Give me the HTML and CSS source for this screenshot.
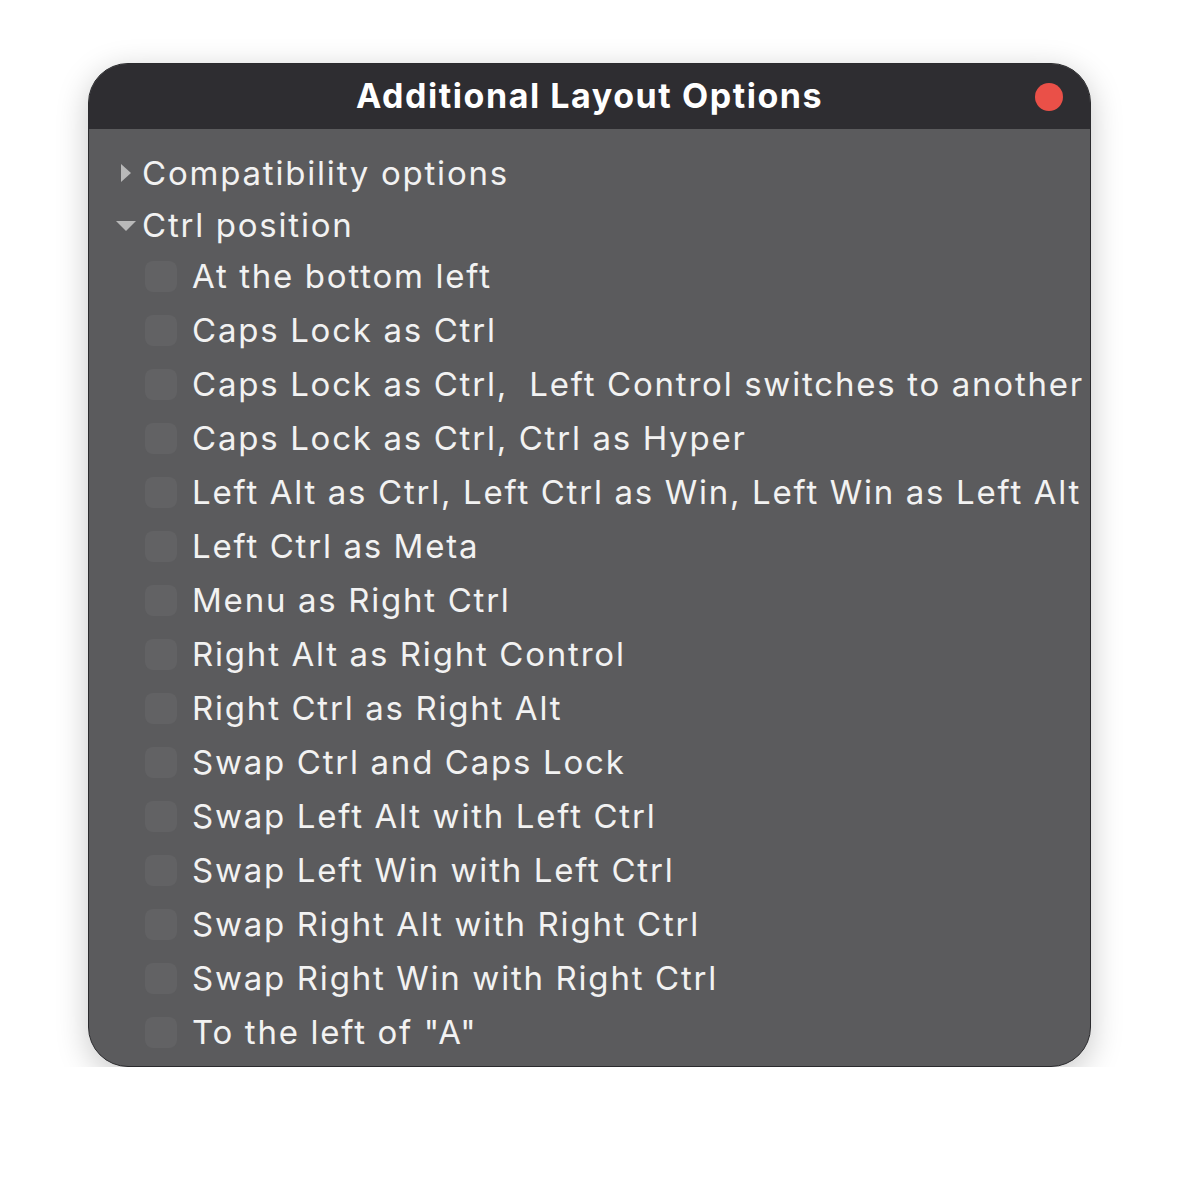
FILE: index.html
```html
<!DOCTYPE html>
<html>
<head>
<meta charset="utf-8">
<link rel="stylesheet" href="styles.css">
</head>
<body>
<div class="window">
  <div class="titlebar">
    <div class="title">Additional Layout Options</div>
    <div class="close"></div>
  </div>
  <div class="content">
    <div class="group"><span class="tri tri-right"></span><span class="label">Compatibility options</span></div>
    <div class="group"><span class="tri tri-down"></span><span class="label">Ctrl position</span></div>
    <div class="items">
      <div class="item"><span class="check"></span><span class="label">At the bottom left</span></div>
      <div class="item"><span class="check"></span><span class="label">Caps Lock as Ctrl</span></div>
      <div class="item"><span class="check"></span><span class="label">Caps Lock as Ctrl,  Left Control switches to another</span></div>
      <div class="item"><span class="check"></span><span class="label">Caps Lock as Ctrl, Ctrl as Hyper</span></div>
      <div class="item"><span class="check"></span><span class="label">Left Alt as Ctrl, Left Ctrl as Win, Left Win as Left Alt</span></div>
      <div class="item"><span class="check"></span><span class="label">Left Ctrl as Meta</span></div>
      <div class="item"><span class="check"></span><span class="label">Menu as Right Ctrl</span></div>
      <div class="item"><span class="check"></span><span class="label">Right Alt as Right Control</span></div>
      <div class="item"><span class="check"></span><span class="label">Right Ctrl as Right Alt</span></div>
      <div class="item"><span class="check"></span><span class="label">Swap Ctrl and Caps Lock</span></div>
      <div class="item"><span class="check"></span><span class="label">Swap Left Alt with Left Ctrl</span></div>
      <div class="item"><span class="check"></span><span class="label">Swap Left Win with Left Ctrl</span></div>
      <div class="item"><span class="check"></span><span class="label">Swap Right Alt with Right Ctrl</span></div>
      <div class="item"><span class="check"></span><span class="label">Swap Right Win with Right Ctrl</span></div>
      <div class="item"><span class="check"></span><span class="label">To the left of "A"</span></div>
    </div>
  </div>
</div>
</body>
</html>
```

FILE: styles.css
```css
html, body {
  margin: 0;
  padding: 0;
  background: #ffffff;
}
body {
  padding: 63px 0 0 88px;
  font-family: Inter, "Noto Sans", sans-serif;
}
.window {
  width: 1003px;
  height: 1004px;
  box-sizing: border-box;
  border: 1px solid #2b2b2e;
  border-radius: 40px;
  overflow: hidden;
  background: #5b5b5d;
  box-shadow: 0 8px 32px rgba(0, 0, 0, 0.22);
  display: flex;
  flex-direction: column;
}
.titlebar {
  height: 65px;
  flex: 0 0 auto;
  background: #2e2d31;
  display: flex;
  align-items: center;
  justify-content: center;
  position: relative;
}
.title {
  color: #ffffff;
  font-weight: 700;
  font-size: 34px;
  letter-spacing: 1.55px;
  margin-top: -2px;
}
.close {
  position: absolute;
  right: 27px;
  top: 19px;
  width: 28px;
  height: 28px;
  border-radius: 50%;
  background: #ea5048;
}
.content {
  padding: 18px 0 0 0;
  color: #f2f2f2;
  font-size: 33px;
  letter-spacing: 1.8px;
  word-spacing: -0.4px;
}
.group {
  height: 52px;
  display: flex;
  align-items: center;
  padding-left: 27px;
  white-space: pre;
}
.tri {
  width: 20px;
  height: 20px;
  margin-right: 6px;
  position: relative;
  flex: 0 0 auto;
}
.tri-right::before {
  content: "";
  position: absolute;
  left: 5px;
  top: 1px;
  border-top: 9px solid transparent;
  border-bottom: 9px solid transparent;
  border-left: 10px solid #b9b9b9;
}
.tri-down::before {
  content: "";
  position: absolute;
  left: 0;
  top: 6px;
  border-left: 10px solid transparent;
  border-right: 10px solid transparent;
  border-top: 10px solid #b9b9b9;
}
.items {
  margin-top: -2px;
}
.item {
  height: 54px;
  display: flex;
  align-items: center;
  padding-left: 56px;
  white-space: pre;
}
.check {
  width: 32px;
  height: 31px;
  border-radius: 8px;
  background: #626264;
  margin-right: 15px;
  flex: 0 0 auto;
}
.label {
  line-height: 1;
}
```
